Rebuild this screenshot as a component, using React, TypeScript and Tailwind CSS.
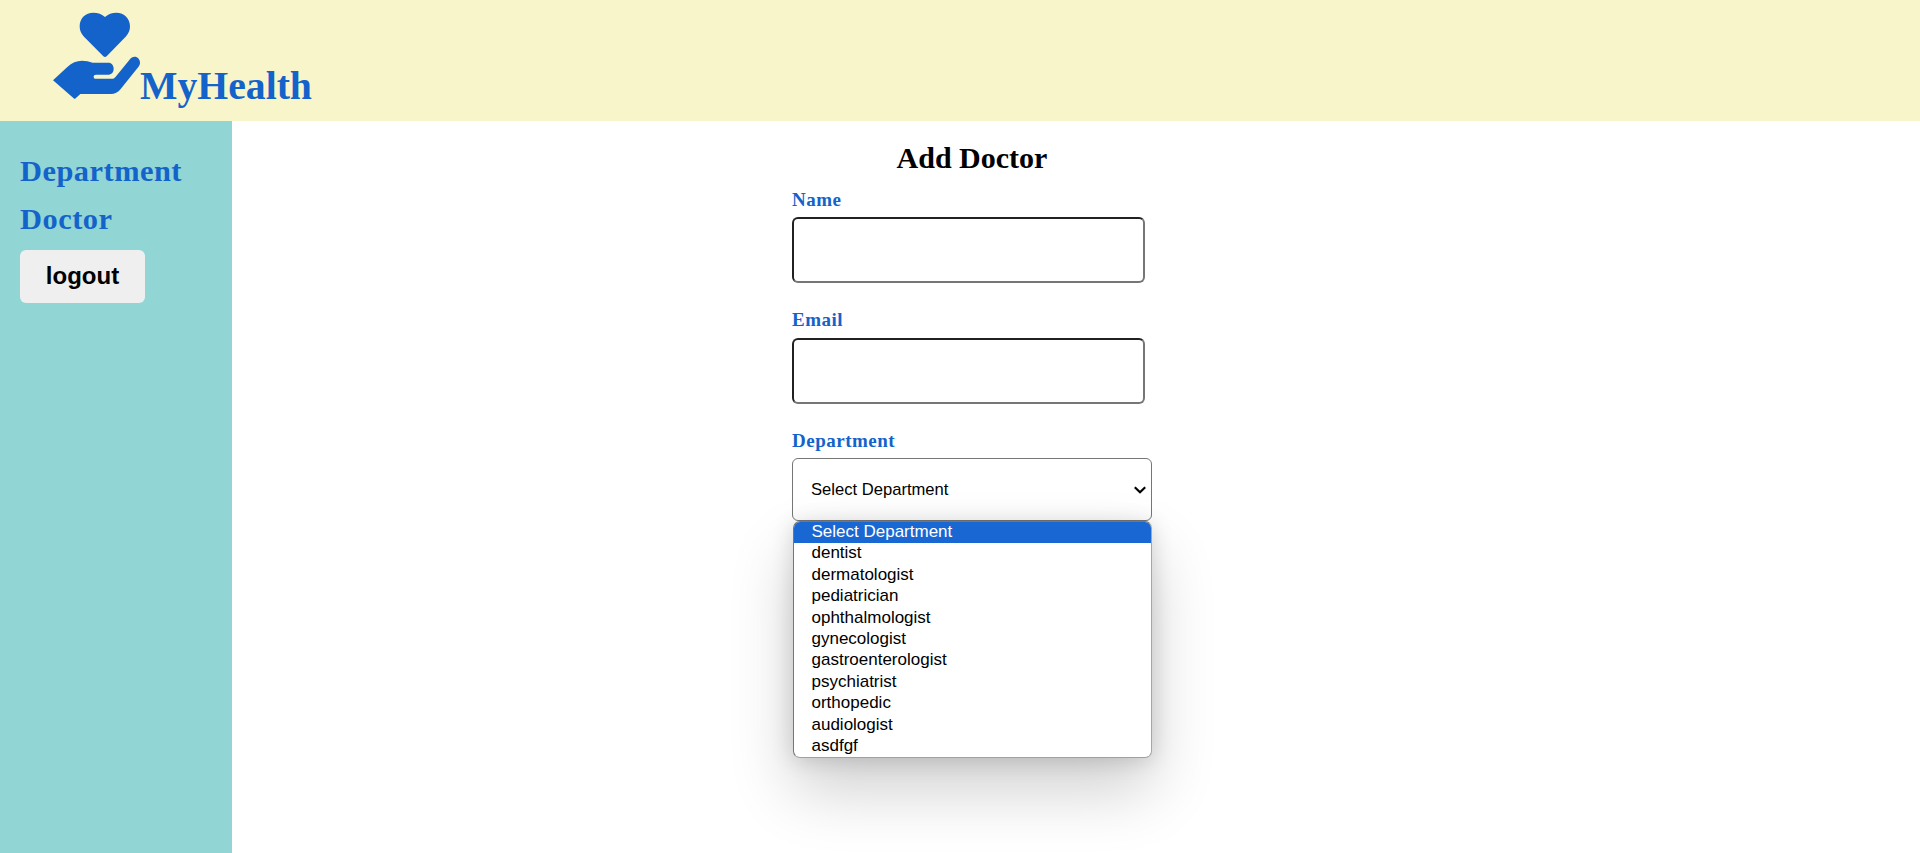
import React from "react";

const serif = "font-['Liberation_Serif',serif]";

const departments: string[] = [
  "dentist",
  "dermatologist",
  "pediatrician",
  "ophthalmologist",
  "gynecologist",
  "gastroenterologist",
  "psychiatrist",
  "orthopedic",
  "audiologist",
  "asdfgf",
];

function Logo() {
  return (
    <svg className="block size-[88px] shrink-0 fill-[#1463ca]" viewBox="39 36 264 264" aria-hidden="true">
      <path d="M190 169 L132 110 C123 101 119 91 119 79 C119 55 136 38 160 38 C174 38 186 42 195 51 C204 42 216 38 229 38 C253 38 270 56 270 79 C270 91 266 101 257 110 L200 169 Q195 173 190 169 Z" />
      <path d="M39 241 L82 201 C95 188 110 182 126 182 C137 182 148 184 158 188 H205 C215 188 221 196 221 206 C221 217 214 224 204 224 H168 C163 224 161 226 161 230 C161 234 163 236 168 236 H214 C220 236 223 235 227 230 L268 180 C273 173 278 170 284 170 C293 170 300 178 300 188 C300 193 298 197 295 201 L242 267 C234 277 224 282 213 282 H121 L107 295 Q104 298 101 295 Z" />
    </svg>
  );
}

function Field({ label, labelHeight, children }: { label: string; labelHeight: string; children: React.ReactNode }) {
  return (
    <div className="flex flex-col items-start">
      <label className={`${serif} ${labelHeight} text-[19px] leading-[24px] font-bold tracking-[0.5px] text-[#1463ca]`}>
        {label}
      </label>
      {children}
    </div>
  );
}

const inputClass =
  "h-[66px] w-[353px] rounded-[6px] border-2 border-t-[#212121] border-r-[#767676] border-b-[#767676] border-l-[#212121] bg-white px-4 outline-none";

export default function App() {
  return (
    <div className="flex h-[853px] flex-col overflow-hidden bg-white">
      <header className="flex h-[121px] shrink-0 bg-[#f9f5cb] pt-3 pl-[53px]">
        <Logo />
        <h1 className={`${serif} -ml-px pt-[52px] text-[39.7px] leading-[44px] font-bold text-[#1463ca]`}>MyHealth</h1>
      </header>
      <div className="flex flex-1">
        <aside className="w-[232px] shrink-0 bg-[#91d5d5] pt-[26px] pl-5">
          <nav className={`${serif} flex flex-col text-[30.4px] leading-[48px] font-bold tracking-[0.5px] text-[#1463ca]`}>
            <a>Department</a>
            <a>Doctor</a>
          </nav>
          <button className="mt-[7px] h-[53px] w-[125px] rounded-[6px] bg-[#efefef] pb-[2px] font-['Liberation_Sans',sans-serif] text-[24px] leading-none font-bold text-black">
            logout
          </button>
        </aside>
        <main className="pl-[560px]">
          <form className="w-[360px] pt-[20px]">
            <h2 className={`${serif} h-[47px] text-center text-[30px] leading-[34px] font-bold text-black`}>Add Doctor</h2>
            <div className="flex flex-col gap-[25px]">
              <Field label="Name" labelHeight="h-[29px]">
                <input className={inputClass} />
              </Field>
              <Field label="Email" labelHeight="h-[30px]">
                <input className={inputClass} />
              </Field>
              <Field label="Department" labelHeight="h-[29px]">
                <div className="relative font-['Liberation_Sans',sans-serif] text-black">
                  <div className="flex h-[63px] w-[360px] items-center justify-between rounded-[6px] border border-[#767676] bg-white pr-[4px] pl-[18px]">
                    <span className="text-[16.6px] leading-[20px]">Select Department</span>
                    <svg className="h-[8px] w-[14px]" viewBox="0 0 14 8" fill="none" stroke="#000" strokeWidth="2.2">
                      <path d="M1.8 1.2 L7 6.3 L12.2 1.2" />
                    </svg>
                  </div>
                  <ul className="absolute top-[63px] left-[1px] w-[359px] overflow-hidden rounded-[7px] border border-t-[#767676] border-r-[#a6a6a6] border-b-[#a0a0a0] border-l-[#767676] bg-white text-[17px] leading-[20.4px] shadow-[0_32px_64px_rgba(0,0,0,0.19),0_2px_21px_rgba(0,0,0,0.15)]">
                    <li className="bg-[#1967d2] pb-px pl-[17.5px] text-white">Select Department</li>
                    {departments.map((name) => (
                      <li key={name} className="pb-px pl-[17.5px]">
                        {name}
                      </li>
                    ))}
                  </ul>
                </div>
              </Field>
            </div>
          </form>
        </main>
      </div>
    </div>
  );
}
